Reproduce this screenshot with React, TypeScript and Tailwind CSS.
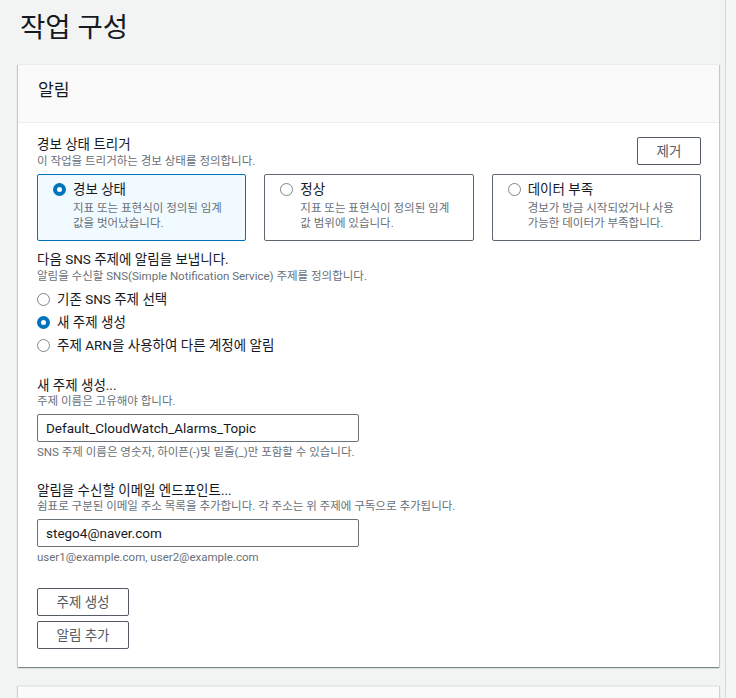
import React from "react";

const Radio = ({ checked }: { checked?: boolean }) =>
  checked ? (
    <span className="block w-[13px] h-[13px] rounded-full border-[4px] border-[#0073bb] bg-white shrink-0" />
  ) : (
    <span className="block w-[13px] h-[13px] rounded-full border-[1.5px] border-[#7d8790] bg-white shrink-0" />
  );

const Tile = ({
  checked,
  label,
  lines,
}: {
  checked?: boolean;
  label: string;
  lines: string[];
}) => (
  <div
    className={
      checked
        ? "h-[67px] rounded-[2px] border border-[#0073bb] bg-[#f1faff] pl-[15px] pt-[5px] flex gap-[7px]"
        : "h-[67px] rounded-[2px] border border-[#5f6870] bg-white pl-[15px] pt-[5px] flex gap-[7px]"
    }
  >
    <div className="h-[18px] flex items-center">
      <Radio checked={checked} />
    </div>
    <div>
      <div className="text-[13.5px] leading-[18px] text-[#16191f]">{label}</div>
      <div className="mt-[3px] text-[11.5px] leading-[14.4px] text-[#687078] whitespace-nowrap">
        {lines.map((l, i) => (
          <div key={i}>{l}</div>
        ))}
      </div>
    </div>
  </div>
);

const ListRadio = ({ checked, label }: { checked?: boolean; label: string }) => (
  <div className="h-[23px] flex items-center gap-[7px]">
    <Radio checked={checked} />
    <span className="text-[13.5px] leading-[18px] text-[#16191f]">{label}</span>
  </div>
);

const Btn = ({ children, className }: { children: React.ReactNode; className?: string }) => (
  <div
    className={
      "h-[28px] flex items-center justify-center rounded-[2px] border border-[#545b64] bg-white text-[13.5px] text-[#545b64] " +
      (className ?? "")
    }
  >
    {children}
  </div>
);

export default function App() {
  return (
    <div className="flex h-[698px] overflow-hidden bg-[#f2f3f3] font-[family-name:'Roboto','Noto_Sans_CJK_KR',sans-serif] text-[#16191f]">
      <div className="w-[725px] shrink-0 pl-[18px] pr-[6px]">
        <h1 className="h-[64px] pt-[10px] pl-[2px] text-[27.5px] leading-[36px] font-normal text-[#16191f]">
          작업 구성
        </h1>

        <div className="bg-white border-t border-[#eaeded] shadow-[0_1px_1px_0_rgba(0,28,36,0.3),1px_1px_1px_0_rgba(0,28,36,0.15),-1px_1px_1px_0_rgba(0,28,36,0.15)]">
          <div className="h-[58px] bg-[#fafafa] border-b border-[#eaeded] pl-[20px] pt-[14px]">
            <div className="text-[17.2px] leading-[22px]">알림</div>
          </div>

          <div className="pl-[19px] pr-[18px] pt-[12px] pb-[18px]">
            <div className="flex justify-between items-start">
              <div>
                <div className="text-[13.5px] leading-[18px]">경보 상태 트리거</div>
                <div className="mt-[1px] text-[11.5px] leading-[14.4px] text-[#687078]">
                  이 작업을 트리거하는 경보 상태를 정의합니다.
                </div>
              </div>
              <Btn className="mt-[2px] w-[64px]">제거</Btn>
            </div>

            <div className="mt-[6px] grid grid-cols-3 gap-[18px]">
              <Tile checked label="경보 상태" lines={["지표 또는 표현식이 정의된 임계", "값을 벗어났습니다."]} />
              <Tile label="정상" lines={["지표 또는 표현식이 정의된 임계", "값 범위에 있습니다."]} />
              <Tile label="데이터 부족" lines={["경보가 방금 시작되었거나 사용", "가능한 데이터가 부족합니다."]} />
            </div>

            <div className="mt-[9px] text-[13.5px] leading-[18px]">다음 SNS 주제에 알림을 보냅니다.</div>
            <div className="mt-[1px] text-[11.5px] leading-[14.4px] text-[#687078]">
              알림을 수신할 SNS(Simple Notification Service) 주제를 정의합니다.
            </div>
            <div className="mt-[4px]">
              <ListRadio label="기존 SNS 주제 선택" />
              <ListRadio checked label="새 주제 생성" />
              <ListRadio label="주제 ARN을 사용하여 다른 계정에 알림" />
            </div>

            <div className="mt-[19px] text-[13.5px] leading-[18px]">새 주제 생성...</div>
            <div className="text-[11.5px] leading-[14.4px] text-[#687078]">주제 이름은 고유해야 합니다.</div>
            <div className="mt-[6px] w-[322px] h-[28px] rounded-[2px] border border-[#687078] bg-white flex items-center pl-[8px] text-[13.5px]">
              Default_CloudWatch_Alarms_Topic
            </div>
            <div className="mt-[3px] text-[11.5px] leading-[14.4px] text-[#687078]">
              SNS 주제 이름은 영숫자, 하이픈(-)및 밑줄(_)만 포함할 수 있습니다.
            </div>

            <div className="mt-[21px] text-[13.5px] leading-[18px]">알림을 수신할 이메일 엔드포인트...</div>
            <div className="text-[11.5px] leading-[14.4px] text-[#687078]">
              쉼표로 구분된 이메일 주소 목록을 추가합니다. 각 주소는 위 주제에 구독으로 추가됩니다.
            </div>
            <div className="mt-[6px] w-[322px] h-[28px] rounded-[2px] border border-[#687078] bg-white flex items-center pl-[8px] text-[13.5px]">
              stego4@naver.com
            </div>
            <div className="mt-[3px] text-[11.5px] leading-[14.4px] text-[#687078]">
              user1@example.com, user2@example.com
            </div>

            <Btn className="mt-[24px] w-[92px]">주제 생성</Btn>
            <Btn className="mt-[5px] w-[92px]">알림 추가</Btn>
          </div>
        </div>

        <div className="mt-[19px] h-[60px] bg-[#fafafa] border-t border-[#eaeded] shadow-[1px_0_1px_0_rgba(0,28,36,0.15),-1px_0_1px_0_rgba(0,28,36,0.15)]" />
      </div>
      <div className="w-px shrink-0 bg-[#d5d9d9]" />
      <div className="flex-1 bg-[#f4f5f5]" />
    </div>
  );
}
